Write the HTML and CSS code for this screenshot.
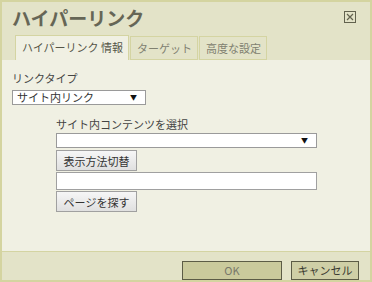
FILE: index.html
```html
<!DOCTYPE html>
<html>
<head>
    <meta charset="utf-8">
    <title>ハイパーリンク</title>
    <link rel="stylesheet" href="styles.css">
</head>
<body>
    <div class="dialog">
        <div class="dialog-head">
            <h1 class="dialog-title">ハイパーリンク</h1>
            <span class="close-btn" title="閉じる">
                <svg width="12" height="12" viewBox="0 0 12 12">
                    <rect x="0.5" y="0.5" width="11" height="11" fill="none" stroke="#62624e" stroke-width="1"/>
                    <path d="M3 3 L9 9 M9 3 L3 9" stroke="#62624e" stroke-width="1.2"/>
                </svg>
            </span>
        </div>

        <div class="tabs">
            <span class="tab active">ハイパーリンク 情報</span>
            <span class="tab">ターゲット</span>
            <span class="tab">高度な設定</span>
        </div>

        <div class="panel">
            <label class="field-label">リンクタイプ</label>
            <div class="select-box small">
                <span>サイト内リンク</span>
                <span class="arrow">▼</span>
            </div>

            <div class="sub-block">
                <label class="field-label">サイト内コンテンツを選択</label>
                <div class="select-box wide">
                    <span></span>
                    <span class="arrow">▼</span>
                </div>
                <button class="btn">表示方法切替</button>
                <input class="text-input" type="text">
                <button class="btn">ページを探す</button>
            </div>
        </div>

        <div class="dialog-foot">
            <button class="foot-btn ok">OK</button>
            <button class="foot-btn cancel">キャンセル</button>
        </div>
    </div>
</body>
</html>
```

FILE: styles.css
```css
body {
    margin: 0;
    font-family: "Noto Sans CJK JP", "Noto Sans", sans-serif;
    font-size: 11px;
    color: #333;
}
.dialog {
    width: 372px;
    height: 282px;
    box-sizing: border-box;
    border: 2px solid #d4d4a0;
    background-color: #e3e3c8;
    display: flex;
    flex-direction: column;
}
.dialog-head {
    display: flex;
    justify-content: space-between;
    align-items: flex-start;
    padding: 0 14px 0 10px;
    height: 34px;
}
.dialog-title {
    margin: 0;
    padding-top: 3px;
    font-size: 19px;
    line-height: 26px;
    font-weight: bold;
    color: #666656;
}
.close-btn {
    display: block;
    width: 12px;
    height: 12px;
    margin-top: 9px;
}
.close-btn svg {
    display: block;
}
.tabs {
    display: flex;
    align-items: flex-end;
    padding-left: 13px;
    height: 25px;
    gap: 1px;
}
.tab {
    box-sizing: border-box;
    height: 24px;
    line-height: 22px;
    padding: 0 5px 0 6px;
    border: 1px solid #d4d4a2;
    background-color: #e3e3c8;
    color: #808070;
    font-size: 11px;
}
.tab.active {
    height: 25px;
    border-bottom: none;
    background-color: #f0f0e3;
    color: #555548;
    line-height: 23px;
}
.panel {
    background-color: #f0f0e3;
    border-bottom: 1px solid #d4d4a2;
    height: 183px;
    padding: 11px 10px 0 10px;
    box-sizing: content-box;
}
.field-label {
    display: block;
    line-height: 15px;
    height: 15px;
    color: #444;
}
.select-box {
    box-sizing: border-box;
    height: 15px;
    border: 1px solid #9a9a9a;
    background-color: #fff;
    display: flex;
    justify-content: space-between;
    align-items: center;
    padding: 0 8px 0 4px;
    line-height: 13px;
    color: #333;
}
.select-box .arrow {
    font-size: 7px;
    color: #111;
}
.select-box.small {
    width: 134px;
    margin-top: 4px;
}
.select-box.wide {
    width: 261px;
}
.sub-block {
    margin: 12px 0 0 44px;
    display: flex;
    flex-direction: column;
    align-items: flex-start;
}
.sub-block .field-label {
    height: 16px;
}
.btn {
    box-sizing: border-box;
    width: 81px;
    height: 21px;
    margin-top: 2px;
    padding: 0;
    border: 1px solid #a0a0a0;
    background: linear-gradient(#f6f6f6, #e0e0e0);
    font-family: inherit;
    font-size: 11px;
    color: #333;
}
.text-input {
    box-sizing: border-box;
    width: 261px;
    height: 18px;
    margin: 1px 0 0 0;
    border: 1px solid #a0a0a0;
    background-color: #fff;
    padding: 0 3px;
}
.text-input + .btn {
    margin-top: 1px;
}
.dialog-foot {
    flex: 1;
    display: flex;
    justify-content: flex-end;
    align-items: flex-start;
    gap: 9px;
    padding: 9px 11px 0 0;
}
.foot-btn {
    box-sizing: border-box;
    height: 19px;
    padding: 0;
    border: 1px solid #5c5c46;
    background-color: #caca9c;
    font-family: inherit;
    font-size: 11px;
    line-height: 17px;
}
.foot-btn.ok {
    width: 100px;
    color: #78786a;
}
.foot-btn.cancel {
    width: 68px;
    color: #3a3a30;
    background-color: #cfcfa6;
}
```
